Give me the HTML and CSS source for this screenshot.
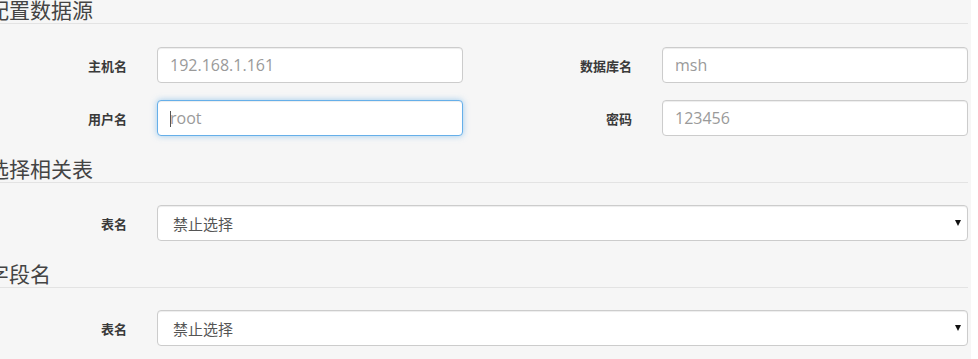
FILE: index.html
```html
<!DOCTYPE html>
<html lang="zh-CN">
<head>
	<meta charset="UTF-8">
	<title>配置数据源</title>
	<link rel="stylesheet" href="styles.css">
</head>
<body>
	<div class="panel">
		<div class="section">
			<h3 class="section-title">配置数据源</h3>
			<div class="form-body first">
				<div class="form-row">
					<label class="form-label">主机名</label>
					<div class="field"><input class="form-control" type="text" placeholder="192.168.1.161"></div>
					<label class="form-label">数据库名</label>
					<div class="field"><input class="form-control" type="text" placeholder="msh"></div>
				</div>
				<div class="form-row">
					<label class="form-label">用户名</label>
					<div class="field focused"><input class="form-control" type="text" placeholder="root"></div>
					<label class="form-label">密码</label>
					<div class="field"><input class="form-control" type="text" placeholder="123456"></div>
				</div>
			</div>
		</div>

		<div class="section">
			<h3 class="section-title">选择相关表</h3>
			<div class="form-body">
				<div class="select-row">
					<label class="form-label">表名</label>
					<div class="select-wrap">
						<select class="form-control select">
							<option>禁止选择</option>
						</select>
					</div>
				</div>
			</div>
		</div>

		<div class="section">
			<h3 class="section-title">字段名</h3>
			<div class="form-body">
				<div class="select-row">
					<label class="form-label">表名</label>
					<div class="select-wrap">
						<select class="form-control select">
							<option>禁止选择</option>
						</select>
					</div>
				</div>
			</div>
		</div>
	</div>
</body>
</html>
```

FILE: styles.css
```css
* {
	margin: 0;
	padding: 0;
	box-sizing: border-box;
}

body {
	background-color: #fff;
	font-family: "Open Sans", "Noto Sans CJK SC", sans-serif;
	color: #333;
}

.panel {
	width: 971px;
	height: 359px;
	padding-right: 3px;
	background-color: #f6f6f6;
	overflow: hidden;
}

.section-title {
	font-family: "Noto Sans CJK SC", sans-serif;
	font-size: 21px;
	font-weight: normal;
	line-height: 18px;
	padding-bottom: 5px;
	text-indent: -12px;
	color: #444;
	border-bottom: 1px solid #e3e3e3;
	white-space: nowrap;
}

.form-body {
	margin: 22px 0 23px;
}

.form-body.first {
	margin-top: 23px;
}

.form-row {
	display: grid;
	grid-template-columns: 127px 306px 139px 306px;
	column-gap: 30px;
	align-items: center;
}

.form-row + .form-row {
	margin-top: 17px;
}

.select-row {
	display: grid;
	grid-template-columns: 127px 1fr;
	column-gap: 30px;
	align-items: center;
}

.form-label {
	text-align: right;
	font-family: "Noto Sans CJK SC", sans-serif;
	font-size: 13px;
	font-weight: bold;
	color: #3a3a3a;
}

.field {
	position: relative;
}

.form-control {
	display: block;
	width: 100%;
	height: 36px;
	padding: 0 12px;
	font-family: "Open Sans", "Noto Sans CJK SC", sans-serif;
	font-size: 16px;
	color: #555;
	background-color: #fff;
	border: 1px solid #ccc;
	border-radius: 4px;
	box-shadow: inset 0 1px 1px rgba(0, 0, 0, .075);
	outline: none;
}

.form-control::placeholder {
	color: #9a9a9a;
}

.focused .form-control {
	border-color: #66afe9;
	box-shadow: inset 0 1px 1px rgba(0, 0, 0, .075), 0 0 6px rgba(102, 175, 233, .6);
}

/* 模拟输入光标 */
.focused::before {
	content: "";
	position: absolute;
	left: 13px;
	top: 11px;
	width: 1px;
	height: 16px;
	background-color: #555;
}

.select-wrap {
	position: relative;
}

.select {
	-webkit-appearance: none;
	appearance: none;
	padding-left: 15px;
	font-family: "Noto Sans CJK SC", sans-serif;
	font-size: 15px;
	color: #555;
}

/* 下拉箭头 */
.select-wrap::after {
	content: "";
	position: absolute;
	right: 7px;
	top: 15px;
	border-left: 3.5px solid transparent;
	border-right: 3.5px solid transparent;
	border-top: 6px solid #111;
	pointer-events: none;
}
```
